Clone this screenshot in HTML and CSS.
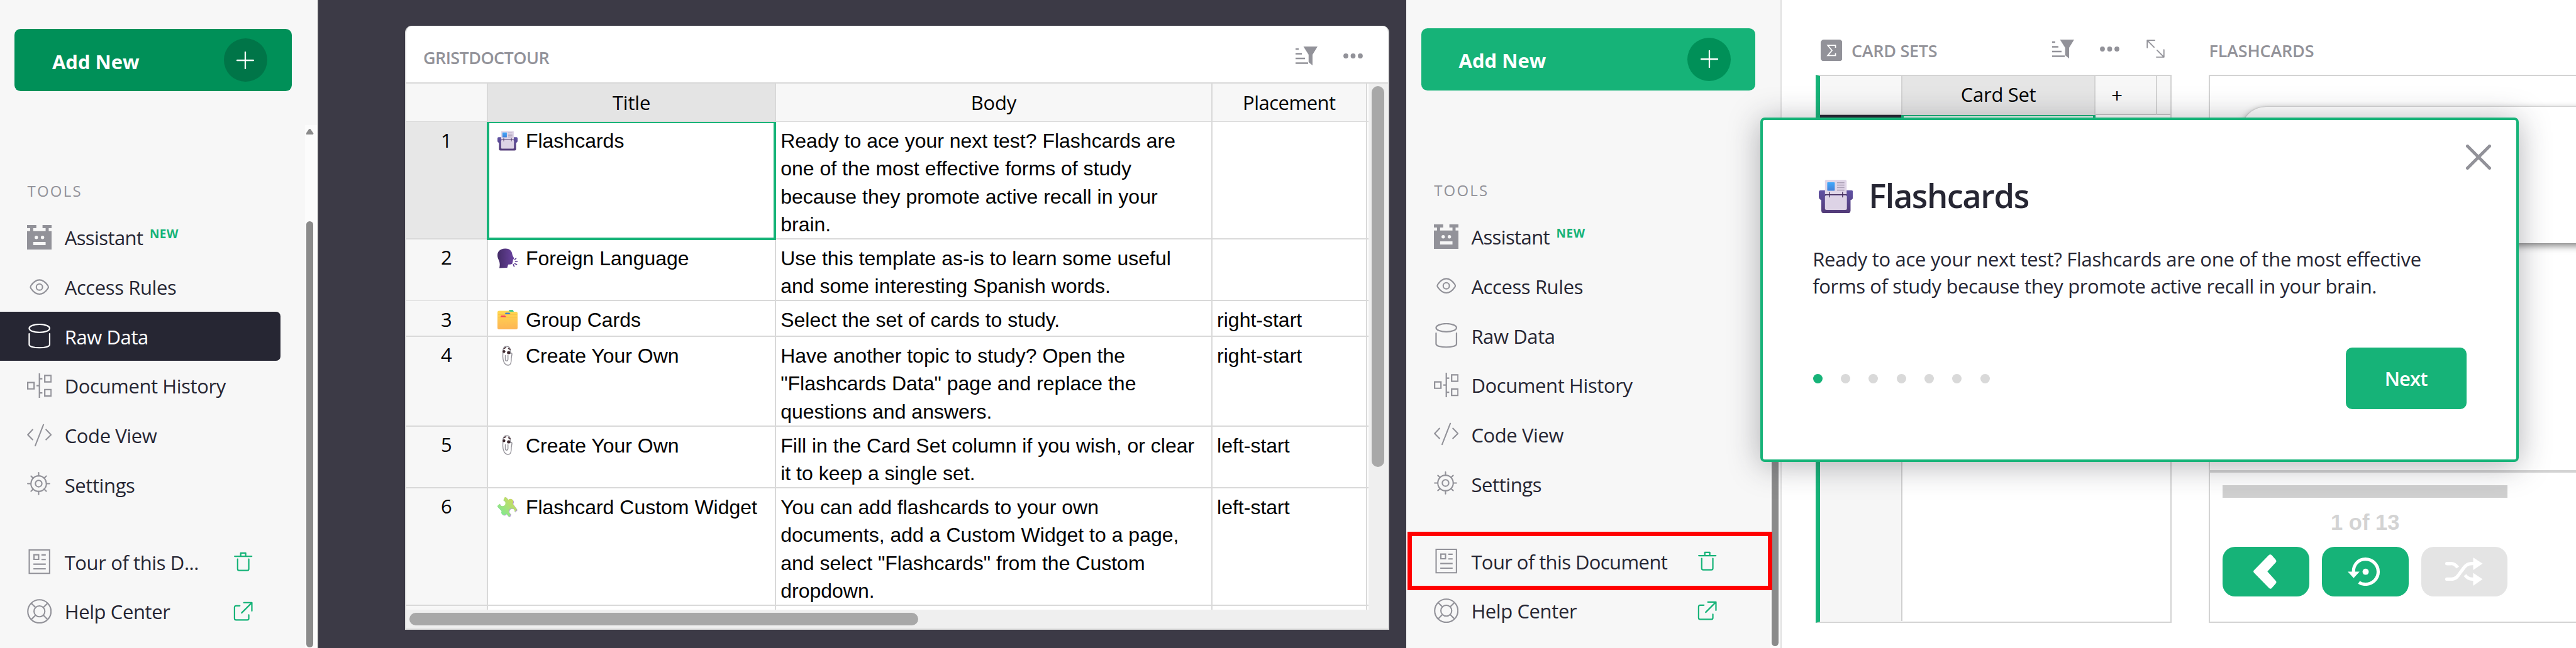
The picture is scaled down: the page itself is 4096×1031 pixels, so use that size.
FILE: index.html
```html
<!DOCTYPE html>
<html lang="en">
<head>
<meta charset="utf-8">
<title>Flashcards - Document tour</title>
<link rel="stylesheet" href="styles.css">
</head>
<body>

<svg class="defs" aria-hidden="true">
  <defs>
    <linearGradient id="g-blue" x1="0" y1="0" x2="0" y2="1"><stop offset="0" stop-color="#3fa9fb"/><stop offset="1" stop-color="#4480d8"/></linearGradient>
    <linearGradient id="g-tray" x1="0" y1="0" x2="0" y2="1"><stop offset="0" stop-color="#5f51a3"/><stop offset="1" stop-color="#533b78"/></linearGradient>
    <linearGradient id="g-head" x1="0" y1="0" x2="1" y2="0"><stop offset="0" stop-color="#432b66"/><stop offset="1" stop-color="#6a43a0"/></linearGradient>
    <linearGradient id="g-folder" x1="0" y1="0" x2="0" y2="1"><stop offset="0" stop-color="#ffd84f"/><stop offset="1" stop-color="#fdb555"/></linearGradient>
    <linearGradient id="g-puzzle" x1="1" y1="0" x2="0" y2="1"><stop offset="0.1" stop-color="#d3d95a"/><stop offset="1" stop-color="#70eb9c"/></linearGradient>

    <symbol id="plus" viewBox="0 0 16 16"><path d="M8 0.5v15M0.5 8h15" fill="none" stroke="currentColor" stroke-width="1.3" stroke-linecap="round"/></symbol>
    <symbol id="robot" viewBox="0 0 16 16"><path fill="currentColor" fill-rule="evenodd" d="M0 0h6v2H4v2h8V2h-2V0h6v2h-2v2h2v12H0V4h2V2H0zM4 11v2h8v-2zM6 6.9a1.1 1.1 0 1 0 0 2.2a1.1 1.1 0 1 0 0-2.2zM10 6.9a1.1 1.1 0 1 0 0 2.2a1.1 1.1 0 1 0 0-2.2z"/></symbol>
    <symbol id="eye" viewBox="0 0 16 16"><g fill="none" stroke="currentColor" stroke-width="0.85"><path d="M2.5 8.9Q1.9 8 2.5 7.1C4 4.900 5.500 3.400 8 3.400s4 1.500 5.500 3.700q.6.900 0 1.800C12 11.100 10.500 12.600 8 12.600S4 11.100 2.500 8.900z"/><circle cx="8" cy="8" r="2"/></g></symbol>
    <symbol id="database" viewBox="0 0 16 16"><g fill="none" stroke="currentColor" stroke-width="0.9" stroke-linecap="round"><ellipse cx="8" cy="3" rx="6.6" ry="2.6"/><path d="M1.400 6.500v7c0 1.300 3 2.100 6.600 2.100s6.600-.8 6.600-2.100v-7"/></g></symbol>
    <symbol id="history" viewBox="0 0 16 16"><path fill="none" stroke="currentColor" stroke-width="0.9" d="M8 0v16M0.450 5.950h4.100v4.100h-4.100zM11.450 1.400h4.100v4.100h-4.100zM11.450 10.550h4.100v4.100h-4.100zM6.100 8h1.900M8 3.500h1.900M8 12.600h1.900"/></symbol>
    <symbol id="code" viewBox="0 0 16 16"><path fill="none" stroke="currentColor" stroke-width="0.85" stroke-linecap="round" stroke-linejoin="round" d="M3.600 4.300L0.500 7.600l3.100 3.200M10.600 1.100L5.300 14.700M12.300 4.300l3.200 3.300-3.200 3.200"/></symbol>
    <symbol id="gear" viewBox="0 0 16 16"><g fill="none" stroke="currentColor" stroke-width="0.85" stroke-linecap="round"><circle cx="7.500" cy="7.500" r="5"/><circle cx="7.500" cy="7.500" r="2.100"/><path d="M7.500 2.500V.45M7.500 12.500v2.050M2.500 7.500H.45M12.500 7.500h2.050M3.960 3.960L2.600 2.600M11.040 11.040l1.360 1.360M3.960 11.040L2.600 12.400M11.040 3.960L12.400 2.600"/></g></symbol>
    <symbol id="page" viewBox="0 0 16 16"><path fill="none" stroke="currentColor" stroke-width="0.85" d="M1.430.43h13.140v15.140H1.430zM4.500 3.500h3v3h-3zM9.300 3.600h2.800M9.300 6.600h2.800M4.100 9.600h8M4.100 12.600h8"/></symbol>
    <symbol id="help" viewBox="0 0 16 16"><g fill="none" stroke="currentColor" stroke-width="0.85"><circle cx="8" cy="8" r="7.500"/><circle cx="8" cy="8" r="3.500"/><path d="M2.700 2.700l2.800 2.800M10.500 10.500l2.800 2.800M13.300 2.700l-2.800 2.800M5.500 10.500l-2.800 2.800"/></g></symbol>
    <symbol id="trash" viewBox="0 0 16 16"><g fill="none" stroke="currentColor" stroke-width="0.9" stroke-linecap="round" stroke-linejoin="round"><path d="M2.500 4.500h11M6.400 4.400V2.400h3.200v2"/><path d="M4.400 6.300v6.400q0 1 1 1h5.200q1 0 1-1V6.300"/></g></symbol>
    <symbol id="external" viewBox="0 0 16 16"><g fill="none" stroke="currentColor" stroke-width="0.9" stroke-linecap="round" stroke-linejoin="round"><path d="M8.400 2.400h5.200v5.300M13.500 2.500L7 9"/><path d="M5.800 4.400H3.400q-1 0-1 1v7.200q0 1 1 1h7.200q1 0 1-1v-2.300"/></g></symbol>
    <symbol id="filter" viewBox="0 0 14 12"><path fill="currentColor" d="M0 1.100h2v1H0zM0 4.100h4v1H0zM0 7.100h6v1H0zM0 10.100h8v1H0zM5 0h9l-3.200 5.200V12L8.300 10V5.200z"/></symbol>
    <symbol id="dots" viewBox="0 0 31 8"><g fill="currentColor"><circle cx="4" cy="4" r="3.900"/><circle cx="15.500" cy="4" r="3.900"/><circle cx="27" cy="4" r="3.900"/></g></symbol>
    <symbol id="expand" viewBox="0 0 12 12"><path fill="none" stroke="currentColor" stroke-width="0.75" stroke-linecap="round" stroke-linejoin="round" d="M.5 5.300V.5h4.900M.5.500L5 5M11.500 6.700v4.800H6.600M11.500 11.500L7 7"/></symbol>
    <symbol id="close" viewBox="0 0 40 40"><path fill="none" stroke="currentColor" stroke-width="5" stroke-linecap="round" d="M2.500 2.500l35 35M37.500 2.500l-35 35"/></symbol>

    <symbol id="cardbox" viewBox="0 0 54.500 53.200">
      <path fill="url(#g-tray)" d="M3 16.800H51.500q3 0 3 3V27q0 4.500-4 5.200v17q0 4-4 4H8q-4 0-4-4v-17q-4-.7-4-5.200V19.800q0-3 3-3z"/>
      <path fill="#e0d6e8" d="M12 0H42q2.300 0 2.300 2.300V24H9.800V2.300Q9.800 0 12 0z"/>
      <rect x="13.400" y="4" width="12" height="13.400" rx="1" fill="url(#g-blue)"/>
      <path stroke="#aa9fb5" stroke-width="1.500" d="M28.900 4.800h11.800M28.900 8.600h11.800M28.900 12.500h11.800M28.900 16.400h11.800"/>
      <path stroke="#46305f" stroke-width="1.400" d="M9.800 23.600h34.800"/>
      <rect x="9.800" y="24.800" width="34.900" height="23.300" rx="2.500" fill="#ddd3e6"/>
      <path stroke="#46305f" stroke-width="1.400" stroke-linecap="round" d="M17 20v7.500M37.800 20v7.500"/>
    </symbol>
    <symbol id="speaking" viewBox="0 0 32 32">
      <path fill="url(#g-head)" d="M12 .5C20 0 23 5 23.500 9.500c.3 2.500 2.300 4.500 2.800 6.500.3 1.300-1.300 1.500-1.600 2.500-.3 1 .4 1.800-.4 2.800-.5.700-.2 1.700-.6 2.700-.8 2-4 1.500-6.700 2l-1.500 5-12.500.5C4 27 4 24 2.500 20 1 16.500 0 14.500 0 11 0 5 4 1 12 .5z"/>
      <path stroke="#5f3f92" stroke-width="1.700" stroke-linecap="round" d="M27.500 17.800l2-1.700M28.500 21h3M27.500 24.500l3 1.300M25.300 26l1.200 2.800"/>
    </symbol>
    <symbol id="folder" viewBox="0 0 32 32">
      <path fill="#4fc98a" d="M19 0h5.500l1.500 3h-9z"/>
      <path fill="url(#g-folder)" d="M2.500 1.500H18q1 1.500 3 1.500h8.500Q32 3 32 5.500v23q0 2.500-2.500 2.500h-27Q0 31 0 28.500V4Q0 1.500 2.500 1.500z"/>
      <path fill="#3b82d0" d="M13 4.500h6l2 2.500h-9.500z"/><path fill="#f8b63e" d="M1 7h30v1H1z" opacity=".5"/>
      <path fill="#f5405f" d="M6 9h6l2 2.500H4.500z"/><path fill="#f8b63e" d="M1 11.500h30v1H1z" opacity=".5"/>
    </symbol>
    <symbol id="clip" viewBox="0 0 32 32">
      <path fill="#fff" stroke="#96949b" stroke-width="1.400" stroke-linejoin="round" d="M9 6C10 2 13 .8 15.500 1.200c2.500.3 4.500 2.300 4.800 5.300v6c1.500-1.500 3-.8 2.700 1.500l-1 5.500c0 4 .3 11.500-5 11.500-6 0-8.500-7-8.500-14z"/>
      <path fill="none" stroke="#96949b" stroke-width="1.500" stroke-linecap="round" d="M12.500 15.500v6c0 3.500 4 3.500 4.200 0v-6"/>
      <path fill="none" stroke="#4a3238" stroke-width="1.600" stroke-linecap="round" d="M10.500 4.500l3-1.700M17.500 4.500l2.700 1.500"/>
      <circle cx="10.300" cy="9.300" r="2.300" fill="#3f2a30"/><circle cx="17.800" cy="11" r="2.600" fill="#3f2a30"/>
    </symbol>
    <symbol id="puzzle" viewBox="0 0 32 32">
      <path fill="#b79bd6" d="M12 1.200Q13.500 0 15 1.200L18 5A4.200 4.200 0 1 1 25 11L31.300 19.500Q32 20.500 31.300 21.500L28 24.500A4.500 4.500 0 1 0 22 27.500L20.500 31Q19.500 32.500 18 31L15 27A4.200 4.200 0 1 1 7.500 23L1.300 16.500Q.2 15.500 1.300 14L4.500 11.200A4.500 4.500 0 1 0 10 6z"/>
      <path fill="url(#g-puzzle)" d="M11.200.6Q12.500-.6 14 .6L17 4.300A4.200 4.200 0 1 1 24 10.300L30.300 18.800Q31 19.800 30.300 20.800L27 23.800A4.500 4.500 0 1 0 21 26.800L19.500 30.300Q18.500 31.800 17 30.300L14 26.300A4.200 4.200 0 1 1 6.500 22.300L.5 15.800Q-.6 14.800.5 13.300L3.700 10.500A4.500 4.500 0 1 0 9.200 5.300z"/>
    </symbol>

    <symbol id="chevron" viewBox="0 0 37 55"><path fill="currentColor" d="M25 .8q2.200-1.500 4.200.4l6.300 7.300q2 2.300 0 4.500L22.300 27.300 35.500 42q2 2.200 0 4.500l-6.300 7.300q-2 1.900-4.200 0L.8 29q-1.400-1.700 0-3.400z"/></symbol>
    <symbol id="restart" viewBox="0 0 52 46"><g fill="none" stroke="currentColor" stroke-width="5.200"><path d="M9.500 25C8 12 17 2.700 28.500 2.700 40 2.700 49 12 49 23S40 43 28.500 43c-4 0-7.500-1-10.500-3"/></g><path fill="currentColor" d="M0 22.700h19L9.500 33z"/><circle cx="28.800" cy="22.900" r="5" fill="currentColor"/></symbol>
    <symbol id="shuffle" viewBox="0 0 60 45"><g fill="none" stroke="currentColor" stroke-width="5.200" stroke-linecap="round"><path d="M2.600 9.700H9.500c5 0 7.500 2.500 10.500 6.300" stroke-linecap="butt"/><path d="M2.600 9.700h5M2.600 34.400h6.900c9 0 11-6 16-12.400S33 9.700 43 9.700h4"/><path d="M31.500 28c3 4 6 6.400 11.500 6.400h4" stroke-linecap="butt"/></g><path fill="currentColor" d="M44.500 0L59.500 9.700 44.500 20zM44.500 24.600L59.500 34.400 44.500 45z"/></symbol>
  </defs>
</svg>

<div class="screen">

  <!-- Left panel: raw data page selected -->
  <nav class="nav">
    <div class="nav-main">
      <button class="add add-hover"><span>Add New</span><i class="add-icon"><svg><use href="#plus"/></svg></i></button>
      <div class="nav-head">TOOLS</div>
      <ul class="menu">
        <li class="tight"><svg class="icon"><use href="#robot"/></svg><span>Assistant</span><sup class="new">NEW</sup></li>
        <li><svg class="icon"><use href="#eye"/></svg><span>Access Rules</span></li>
        <li class="active"><svg class="icon"><use href="#database"/></svg><span>Raw Data</span></li>
        <li><svg class="icon"><use href="#history"/></svg><span>Document History</span></li>
        <li><svg class="icon"><use href="#code"/></svg><span>Code View</span></li>
        <li><svg class="icon"><use href="#gear"/></svg><span>Settings</span></li>
        <li class="split"><svg class="icon"><use href="#page"/></svg><span>Tour of this D...</span><svg class="icon action"><use href="#trash"/></svg></li>
        <li><svg class="icon"><use href="#help"/></svg><span>Help Center</span><svg class="icon action"><use href="#external"/></svg></li>
      </ul>
    </div>
    <div class="nav-scroll"><i class="arrow"></i><i class="thumb"></i></div>
  </nav>

  <!-- Raw data table -->
  <main class="stage">
    <section class="card">
      <header class="card-head"><h2>GRISTDOCTOUR</h2><svg class="ic-filter"><use href="#filter"/></svg><svg class="ic-dots"><use href="#dots"/></svg></header>
      <div class="card-body">
        <div class="grid">
          <div class="row head"><div class="num"></div><div class="cell sel">Title</div><div class="cell">Body</div><div class="cell wide">Placement</div><div class="cell"></div></div>
          <div class="row r4 current"><div class="num">1</div><div class="cell cursor"><svg class="emoji"><use href="#cardbox"/></svg>Flashcards</div><div class="cell">Ready to ace your next test? Flashcards are<br>one of the most effective forms of study<br>because they promote active recall in your<br>brain.</div><div class="cell"></div><div class="cell"></div></div>
          <div class="row r2"><div class="num">2</div><div class="cell"><svg class="emoji"><use href="#speaking"/></svg>Foreign Language</div><div class="cell">Use this template as-is to learn some useful<br>and some interesting Spanish words.</div><div class="cell"></div><div class="cell"></div></div>
          <div class="row r1"><div class="num">3</div><div class="cell"><svg class="emoji"><use href="#folder"/></svg>Group Cards</div><div class="cell">Select the set of cards to study.</div><div class="cell">right-start</div><div class="cell"></div></div>
          <div class="row r3"><div class="num">4</div><div class="cell"><svg class="emoji"><use href="#clip"/></svg>Create Your Own</div><div class="cell">Have another topic to study? Open the<br>"Flashcards Data" page and replace the<br>questions and answers.</div><div class="cell">right-start</div><div class="cell"></div></div>
          <div class="row r2"><div class="num">5</div><div class="cell"><svg class="emoji"><use href="#clip"/></svg>Create Your Own</div><div class="cell">Fill in the Card Set column if you wish, or clear<br>it to keep a single set.</div><div class="cell">left-start</div><div class="cell"></div></div>
          <div class="row r4"><div class="num">6</div><div class="cell"><svg class="emoji"><use href="#puzzle"/></svg>Flashcard Custom Widget</div><div class="cell">You can add flashcards to your own<br>documents, add a Custom Widget to a page,<br>and select "Flashcards" from the Custom<br>dropdown.</div><div class="cell">left-start</div><div class="cell"></div></div>
          <div class="row rest"><div class="num"></div><div class="cell"></div><div class="cell"></div><div class="cell"></div><div class="cell"></div></div>
        </div>
        <div class="vbar"><i></i></div>
        <div class="hbar"><i></i></div>
      </div>
    </section>
  </main>

  <!-- Left panel of the template page -->
  <nav class="nav nav-second">
    <div class="nav-main">
      <button class="add"><span>Add New</span><i class="add-icon"><svg><use href="#plus"/></svg></i></button>
      <div class="nav-head">TOOLS</div>
      <ul class="menu">
        <li class="tight"><svg class="icon"><use href="#robot"/></svg><span>Assistant</span><sup class="new">NEW</sup></li>
        <li><svg class="icon"><use href="#eye"/></svg><span>Access Rules</span></li>
        <li><svg class="icon"><use href="#database"/></svg><span>Raw Data</span></li>
        <li><svg class="icon"><use href="#history"/></svg><span>Document History</span></li>
        <li><svg class="icon"><use href="#code"/></svg><span>Code View</span></li>
        <li><svg class="icon"><use href="#gear"/></svg><span>Settings</span></li>
        <li class="split tight marked"><svg class="icon"><use href="#page"/></svg><span>Tour of this Document</span><svg class="icon action"><use href="#trash"/></svg></li>
        <li><svg class="icon"><use href="#help"/></svg><span>Help Center</span><svg class="icon action"><use href="#external"/></svg></li>
      </ul>
    </div>
    <div class="nav-scroll"><i class="thumb"></i></div>
  </nav>

  <!-- Card Sets and Flashcards widgets -->
  <main class="page">
    <section class="widget sets">
      <header class="widget-head"><svg class="sigma" viewBox="0 0 34 34"><rect width="34" height="34" rx="5" fill="#929299"/><path d="M23.200 12.800V9H11l6.700 8L11 25h12.200v-3.800" fill="none" stroke="#fff" stroke-width="1.700"/></svg><h2>CARD SETS</h2><svg class="ic-filter"><use href="#filter"/></svg><svg class="ic-dots"><use href="#dots"/></svg><svg class="ic-expand"><use href="#expand"/></svg></header>
      <div class="sets-frame">
        <div class="sets-head"><div></div><div class="sel">Card Set</div><div class="plus">+</div><div></div></div>
        <div class="sets-body"><div class="sets-nums"><i></i></div><div class="sets-cells"><i></i></div></div>
      </div>
    </section>
    <section class="widget flash">
      <header class="widget-head"><h2>FLASHCARDS</h2></header>
      <div class="flash-frame">
        <div class="flash-view"><div class="flash-card"></div></div>
        <div class="flash-controls">
          <div class="progress"></div>
          <div class="count">1 of 13</div>
          <div class="buttons"><button><svg class="b-chevron"><use href="#chevron"/></svg></button><button><svg class="b-restart"><use href="#restart"/></svg></button><button class="off"><svg class="b-shuffle"><use href="#shuffle"/></svg></button></div>
        </div>
      </div>
    </section>
  </main>

  <div class="popup">
    <svg class="close"><use href="#close"/></svg>
    <h1><svg><use href="#cardbox"/></svg><span>Flashcards</span></h1>
    <p>Ready to ace your next test? Flashcards are one of the most effective<br><span>forms of study because they promote active recall in your brain.</span></p>
    <footer>
      <div class="steps"><i class="on"></i><i></i><i></i><i></i><i></i><i></i><i></i></div>
      <button class="next">Next</button>
    </footer>
  </div>
</div>
</body>
</html>
```
FILE: styles.css
```css
*, *::after { box-sizing: border-box; }

body {
  margin: 0;
  background: #fff;
  color: #262633;
  font-family: "Open Sans", "Noto Sans", sans-serif;
  font-size: 31px;
}

h1, h2, p, ul { margin: 0; padding: 0; font-weight: 400; }
button { border: 0; padding: 0; color: #fff; font: inherit; }
svg { display: block; flex: none; }
i { display: block; font-style: normal; }
.defs { position: absolute; width: 0; height: 0; }

.screen {
  position: relative;
  display: flex;
  width: 4096px;
  height: 1031px;
  overflow: hidden;
}

/* Navigation panels */
.nav {
  display: flex;
  flex: none;
  width: 506px;
  background: #f7f7f7;
  border-right: 2px solid #d0d0d0;
}
.nav-main { width: 485px; padding-top: 46.3px; }
.nav-second { width: 597.7px; border-right-color: #e0e0e0; }
.nav-second .nav-main { width: 578.5px; padding-top: 45.2px; padding-left: 1px; }

.add {
  display: flex;
  align-items: center;
  justify-content: space-between;
  width: 440.6px;
  height: 98.5px;
  margin-left: 23.4px;
  padding: 0 39px 0 59.5px;
  background: #16b378;
  border-radius: 9.8px;
  font-weight: 700;
}
.add span { padding-top: 4px; }
.nav-second .add { width: 531.4px; }
.add-hover { background: #009058; }
.add-icon {
  display: flex;
  align-items: center;
  justify-content: center;
  width: 69px;
  height: 69px;
  border-radius: 50%;
  background: #009058;
}
.add-hover .add-icon { background: #007548; }
.add-icon svg { width: 28px; height: 28px; }

.nav-head {
  height: 193.5px;
  padding: 142px 0 0 43.5px;
  color: #929299;
  font-size: 24px;
  line-height: 34px;
  letter-spacing: 2.2px;
}
.nav .nav-head { font-weight: 500; }
.menu { list-style: none; }
.menu li {
  position: relative;
  display: flex;
  align-items: center;
  width: 445.5px;
  height: 78.67px;
  padding-left: 43px;
  letter-spacing: -0.4px;
}
.menu li span { padding-top: 1.5px; }
.menu .tight { letter-spacing: -0.6px; }
.nav-second .menu li { width: 555px; }
.icon { width: 39.4px; height: 39.4px; color: #929299; margin-right: 20.3px; }
.menu .action { margin: 0 39.5px 0 auto; color: #16b378; }
.nav-second .menu .action { margin-right: 57px; }
.new {
  align-self: flex-start;
  margin: 22px 0 0 10.5px;
  color: #16b378;
  font-size: 19px;
  font-weight: 700;
  line-height: 25px;
  letter-spacing: 0.5px;
}
.menu .active { background: #262633; color: #fff; border-radius: 0 7px 7px 0; }
.menu .active .icon { color: #fff; }
.menu .split { margin-top: 44.5px; }
.marked::after {
  content: "";
  position: absolute;
  z-index: 1;
  left: 1px;
  top: -8px;
  width: 580.5px;
  height: 93px;
  border: 7.3px solid #f00;
}

.nav-scroll {
  display: flex;
  flex-direction: column;
  align-items: center;
  width: 19px;
  margin-top: 199px;
  background: #fcfcfc;
}
.nav-second .nav-scroll { width: 17px; }
.nav-scroll .arrow {
  width: 12px;
  height: 9px;
  margin: 6px 4px 0 0;
  background: #8b8b8b;
  clip-path: polygon(42% 0, 58% 0, 100% 80%, 95% 100%, 5% 100%, 0 80%);
}
.nav-scroll .thumb {
  width: 11px;
  height: 677.5px;
  margin: 138px 4px 0 0;
  border-radius: 6px;
  background: #8b8b8b;
}
.nav-second .thumb { height: 676px; margin: 153px 1px 0 0; }

/* Raw data view */
.stage {
  flex: none;
  width: 1729.7px;
  padding: 41.4px 0 0 137.6px;
  background: #3c3a46;
}
.card {
  display: flex;
  flex-direction: column;
  width: 1565.3px;
  height: 961px;
  border: 2px solid #d9d9d9;
  border-top: 0;
  border-radius: 11px 11px 0 0;
  background: #fff;
  overflow: hidden;
}
.card-head {
  display: flex;
  flex: none;
  align-items: center;
  height: 91.4px;
  padding: 5px 39.7px 0 27.5px;
  border-bottom: 2.3px solid #d9d9d9;
}
h2 { flex: 1; color: #929299; font-size: 27px; font-weight: 600; line-height: 37px; }
.card-head h2 { padding-top: 5px; letter-spacing: -0.6px; }
.ic-filter { width: 35px; height: 30px; color: #929299; }
.ic-dots { width: 31px; height: 8px; color: #929299; }
.card-head .ic-dots { margin-left: 41px; }

.card-body {
  display: grid;
  flex: 1;
  grid-template: 837.7px 1fr / 1530.8px 1fr;
  background: #efefef;
}
.grid { background: #fff; overflow: hidden; }
.row {
  display: grid;
  grid-template-columns: 130.6px 457.8px 693.9px 245.9px 1fr;
  border-bottom: 2.3px solid #d9d9d9;
  color: #000;
  line-height: 44.3px;
}
.row > div { border-right: 2px solid #d9d9d9; }
.row > div:last-child { border-right: 0; }
.num {
  padding-top: 6.4px;
  background: #f7f7f7;
  color: #000;
  text-align: center;
}
.cell {
  padding: 8px 0 0 7.2px;
  font-family: "Liberation Sans", Arial, sans-serif;
  font-size: 32px;
  white-space: nowrap;
}
.head .cell {
  padding: 0;
  background: #f7f7f7;
  font-family: inherit;
  font-size: 31px;
  line-height: 60.5px;
  letter-spacing: -0.2px;
  text-align: center;
}
.head .wide { letter-spacing: -0.5px; }
.head .cell:last-child { background: #fff; }
.head .sel { background: #e4e4e4; }
.head { height: 61.4px; }
.r1 { height: 56.5px; }
.r2 { height: 98.4px; }
.r3 { height: 142.6px; }
.r4 { height: 186.9px; }
.rest { height: 10px; border: 0; }
.current .num { background: #e7e7e7; }
.emoji { float: left; width: 32px; height: 32px; margin: 5.9px 13px 0 7.5px; }
.row .cursor { position: relative; }
.cursor::after {
  content: "";
  position: absolute;
  inset: 0 -2px -2.3px -2px;
  border: solid #16b378;
  border-width: 2.5px 4px 4.5px 4px;
}
.vbar { padding: 4.6px 0 0 5px; }
.vbar i { width: 19.5px; height: 605.3px; border-radius: 10px; background: #a8a8a8; }
.hbar { grid-column: 1 / 3; padding: 4.5px 0 0 5px; }
.hbar i { width: 809.6px; height: 20px; border-radius: 10px; background: #a8a8a8; }

/* Template page */
.page { display: flex; flex: 1; min-width: 0; gap: 59.3px; padding-left: 53.9px; }
.widget { flex: none; }
.widget-head { display: flex; align-items: center; height: 119.3px; padding-top: 36px; }
.sets { width: 565.9px; }
.sets .widget-head { padding-left: 7.7px; }
.sets h2 { padding-left: 14.5px; letter-spacing: -0.3px; }
.sets .ic-filter { margin-right: 41.5px; }
.sets .ic-dots { margin-right: 42.5px; }
.widget-head h2 { padding-top: 6px; }
.sigma { width: 34.5px; height: 34.5px; margin-top: 5px; }
.ic-expand { width: 29px; height: 29px; margin-right: 11.5px; color: #929299; }
.sets-frame {
  width: 565.9px;
  height: 871.7px;
  border: 2.3px solid #d3d3d3;
  border-left: 7.7px solid #16b378;
  border-right-width: 2px;
}
.sets-head {
  display: grid;
  grid-template-columns: 130.5px 307.7px 98px 1fr;
  height: 61.5px;
  background: #f7f7f7;
  border-bottom: 2.3px solid #c8c8c8;
  color: #000;
  line-height: 59.5px;
  letter-spacing: -0.3px;
  text-align: center;
}
.sets-head div { border-right: 2px solid #d3d3d3; }
.sets-head div:last-child { border: 0; }
.sets-head .sel { background: #e5e5e5; }
.sets-head .plus { padding-right: 29px; line-height: 62px; }
.sets-body { display: flex; height: 805.6px; }
.sets-nums { width: 130.5px; background: #f6f6f6; border-right: 2px solid #d0d0d0; }
.sets-nums i { height: 40px; background: #262633; }
.sets-cells i { width: 309px; height: 40px; margin-left: -2px; border: 4px solid #16b378; border-top-width: 2px; }

.flash { width: 640px; }
.flash h2 { letter-spacing: -0.2px; }
.flash-frame {
  width: 640px;
  height: 871.7px;
  border: 2.3px solid #d3d3d3;
}
.flash-view {
  height: 631px;
  padding: 49px 0 0 48.5px;
  border-bottom: 4.6px solid #d3d3d3;
}
.flash-card {
  width: 640px;
  height: 216.5px;
  border-radius: 40px;
  background: #fff;
  box-shadow: 0 4px 12px rgba(0, 0, 0, 0.5), 0 0 2px rgba(0, 0, 0, 0.25);
}
.flash-controls { width: 452.6px; margin: 19.7px 0 0 20px; }
.progress { height: 19.7px; background: #d0d0d0; }
.count {
  height: 78.2px;
  color: #d3d3d3;
  font: 700 34.5px/78px "Liberation Sans", Arial, sans-serif;
  text-align: center;
}
.buttons { display: flex; justify-content: space-between; }
.buttons button {
  display: flex;
  align-items: center;
  justify-content: center;
  width: 137.5px;
  height: 79.2px;
  border-radius: 20px;
  background: #16b378;
}
.buttons .off { background: #e4e4e4; }
.b-chevron { width: 37px; height: 55px; margin-right: 3px; }
.b-restart { width: 51.5px; height: 45.5px; margin-right: 4px; }
.b-shuffle { width: 60px; height: 45px; }

/* Tour popup */
.popup {
  position: absolute;
  left: 2799.3px;
  top: 186.7px;
  width: 1205.3px;
  height: 548.8px;
  padding: 90px 79px 0 79px;
  border: 4.9px solid #16b378;
  border-radius: 7px;
  background: #fff;
  box-shadow: 0 5px 50px rgba(38, 38, 51, 0.36);
}
.close { position: absolute; top: 39.5px; right: 39.5px; width: 40px; height: 40px; color: #929299; }
.popup h1 {
  display: flex;
  height: 72px;
  padding-left: 9.5px;
  font-size: 52.5px;
  font-weight: 600;
  line-height: 60px;
  letter-spacing: -1.5px;
}
.popup h1 svg { width: 54.5px; height: 53.2px; margin: 5px 25px 0 0; }
.popup p { padding-top: 38.2px; line-height: 43.1px; letter-spacing: -0.31px; white-space: nowrap; }
.popup p span { letter-spacing: -0.38px; }
.popup footer { display: flex; align-items: center; justify-content: space-between; margin-top: 75.8px; }
.steps { display: flex; gap: 29.3px; padding-left: 0.5px; }
.steps i { width: 15px; height: 15px; border-radius: 50%; background: #d9d9d9; }
.steps .on { background: #16b378; }
.next {
  width: 192px;
  height: 98.3px;
  border-radius: 10px;
  background: #16b378;
  font-weight: 600;
  line-height: 99.3px;
  letter-spacing: -0.9px;
}
```
